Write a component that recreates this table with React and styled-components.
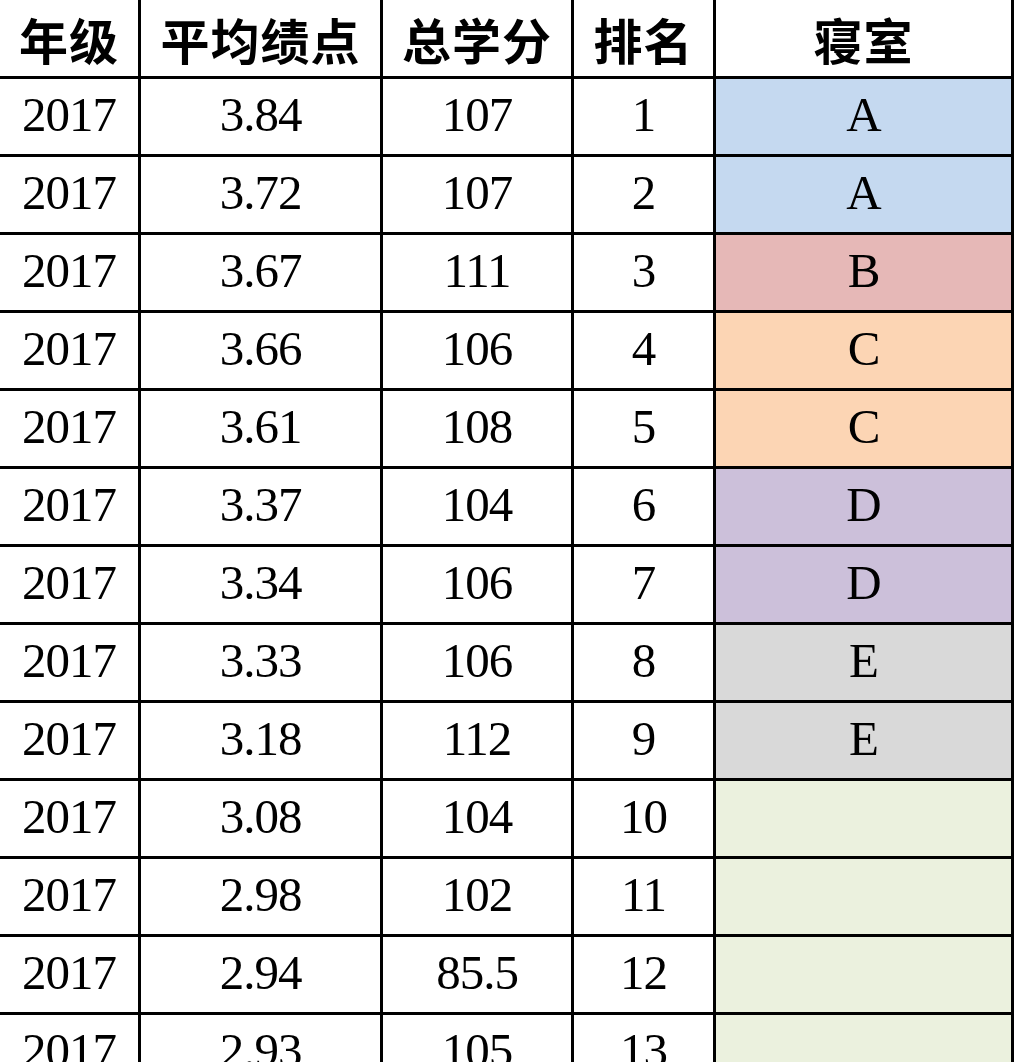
import React from 'react';
import styled, { createGlobalStyle } from 'styled-components';

const GlobalStyle = createGlobalStyle`
    html, body {
        margin: 0;
        padding: 0;
        background: #ffffff;
        height: 1062px;
        overflow: hidden;
    }
`;

const Sheet = styled.div`
    display: grid;
    grid-template-columns: 138px 239px 188px 139px 295px;
    grid-auto-rows: 75px;
    grid-template-rows: 76px;
    column-gap: 3px;
    row-gap: 3px;
    width: 1011px;
    background: #000000;
    border-right: 3px solid #000000;
`;

const HeadCell = styled.div`
    display: flex;
    align-items: center;
    justify-content: center;
    background: #ffffff;
    font: normal normal 700 49px "Noto Sans CJK SC", "Noto Sans", sans-serif;
    color: #000000;
    letter-spacing: 1px;
`;

const Cell = styled.div`
    display: flex;
    align-items: center;
    justify-content: center;
    padding-bottom: 4px;
    box-sizing: border-box;
    background: ${props => props.$bg || '#ffffff'};
    font: normal normal 400 49px "Liberation Serif", "DejaVu Serif", serif;
    letter-spacing: -1px;
    color: #000000;
`;

const roomColors = {
    A: '#c5d9f0',
    B: '#e6b8b7',
    C: '#fcd5b4',
    D: '#ccc0da',
    E: '#d9d9d9',
    '': '#ebf1de',
};

const headers = ['年级', '平均绩点', '总学分', '排名', '寝室'];

const rows = [
    ['2017', '3.84', '107', '1', 'A'],
    ['2017', '3.72', '107', '2', 'A'],
    ['2017', '3.67', '111', '3', 'B'],
    ['2017', '3.66', '106', '4', 'C'],
    ['2017', '3.61', '108', '5', 'C'],
    ['2017', '3.37', '104', '6', 'D'],
    ['2017', '3.34', '106', '7', 'D'],
    ['2017', '3.33', '106', '8', 'E'],
    ['2017', '3.18', '112', '9', 'E'],
    ['2017', '3.08', '104', '10', ''],
    ['2017', '2.98', '102', '11', ''],
    ['2017', '2.94', '85.5', '12', ''],
    ['2017', '2.93', '105', '13', ''],
];

const App = () => {
    return (
        <>
            <GlobalStyle />
            <Sheet>
                {headers.map(h => <HeadCell key={h}>{h}</HeadCell>)}
                {rows.map((r, i) => (
                    <React.Fragment key={i}>
                        <Cell>{r[0]}</Cell>
                        <Cell>{r[1]}</Cell>
                        <Cell>{r[2]}</Cell>
                        <Cell>{r[3]}</Cell>
                        <Cell $bg={roomColors[r[4]]}>{r[4]}</Cell>
                    </React.Fragment>
                ))}
            </Sheet>
        </>
    );
};

export default App;
